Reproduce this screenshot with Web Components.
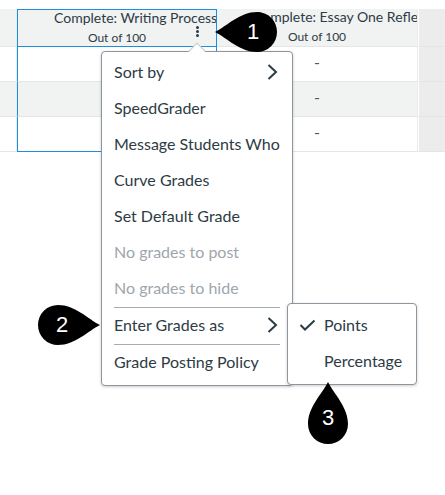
<!DOCTYPE html>
<html>
<head>
<meta charset="utf-8">
<style>
  html, body { margin: 0; background: #fff; }
  body { width: 445px; height: 495px; overflow: hidden; font-family: Lato, "Liberation Sans", sans-serif; color: #2d3b45; }
  gb-stage { display: block; }
</style>
</head>
<body>
<gb-stage>
  <gb-grid></gb-grid>

  <gb-menu style="left:101px;top:51px;width:192px;height:335px" arrow>
    <gb-item arrow-right>Sort by</gb-item>
    <gb-item>SpeedGrader</gb-item>
    <gb-item>Message Students Who</gb-item>
    <gb-item>Curve Grades</gb-item>
    <gb-item>Set Default Grade</gb-item>
    <gb-item disabled>No grades to post</gb-item>
    <gb-item disabled>No grades to hide</gb-item>
    <gb-sep></gb-sep>
    <gb-item arrow-right>Enter Grades as</gb-item>
    <gb-sep></gb-sep>
    <gb-item>Grade Posting Policy</gb-item>
  </gb-menu>

  <gb-menu style="left:287px;top:303px;width:130px;height:82px">
    <gb-item checked>Points</gb-item>
    <gb-item inset>Percentage</gb-item>
  </gb-menu>

  <gb-pin dir="left" style="left:215px;top:12px">1</gb-pin>
  <gb-pin dir="right" style="left:38px;top:305px">2</gb-pin>
  <gb-pin dir="up" style="left:308px;top:382px">3</gb-pin>
</gb-stage>

<script>
class GbStage extends HTMLElement {
  constructor() {
    super();
    this.attachShadow({ mode: 'open' });
    this.shadowRoot.innerHTML = `
      <style>
        :host { display: block; position: relative; box-sizing: border-box; width: 445px; height: 495px; padding-top: 9px; }
      </style>
      <slot></slot>
    `;
  }
}

class GbGrid extends HTMLElement {
  constructor() {
    super();
    this.attachShadow({ mode: 'open' });
    const title1 = 'Complete: Writing Process';
    const title2 = 'Complete: Essay One Reflection';
    this.shadowRoot.innerHTML = `
      <style>
        :host {
          display: grid;
          grid-template-columns: 17px 200px 201px 27px;
          grid-template-rows: 38px 35px 35px 35px;
          font-size: 13px;
          color: #2d3b45;
        }
        .cell { box-sizing: border-box; border-right: 1px solid #e9ebec; border-bottom: 1px solid #e3e5e6; min-width: 0; }
        .gray { background: #f1f2f2; }
        .side { background: #ececec; border-right: 0; border-left: 1px solid #fff; }
        .head { display: flex; flex-direction: column; overflow: hidden; background: #f1f2f2; position: relative; }
        .title { white-space: nowrap; line-height: 18px; font-size: 14px; padding-left: 36px; margin-top: -1px; }
        .sub { line-height: 22px; font-size: 12px; text-align: center; }
        .dash { display: flex; justify-content: center; padding-top: 3px; font-size: 16px; line-height: 24px; color: #4d5963; }
        .sel-head { border: 1px solid #1c8fdc; background: #f1f2f2; }
        .sel { border-left: 1px solid #1c8fdc; border-right: 1px solid #1c8fdc; }
        .sel-last { border-bottom: 1px solid #1c8fdc; }
        .dots { position: absolute; left: 178px; top: 16px; width: 3px; display: flex; flex-direction: column; gap: 1px; }
        .dots i { display: block; width: 3px; height: 3px; border-radius: 50%; background: #2d3b45; }
      </style>
      <div class="cell gray"></div>
      <div class="cell head sel-head"><span class="title">${title1}</span><span class="sub">Out of 100</span>
        <div class="dots"><i></i><i></i><i></i></div></div>
      <div class="cell head"><span class="title">${title2}</span><span class="sub">Out of 100</span></div>
      <div class="cell side"></div>

      <div class="cell"></div><div class="cell sel"></div><div class="cell dash">-</div><div class="cell side"></div>
      <div class="cell gray"></div><div class="cell sel gray"></div><div class="cell dash gray">-</div><div class="cell side"></div>
      <div class="cell"></div><div class="cell sel sel-last"></div><div class="cell dash">-</div><div class="cell side"></div>
    `;
  }
}

class GbMenu extends HTMLElement {
  constructor() {
    super();
    this.attachShadow({ mode: 'open' });
    this.shadowRoot.innerHTML = `
      <style>
        :host {
          display: flex;
          flex-direction: column;
          position: absolute;
          box-sizing: border-box;
          padding: 3px 0;
          background: #fff;
          border: 1px solid #8d959f;
          border-radius: 4px;
          box-shadow: 0 1px 3px rgba(0,0,0,.2);
        }
        .tip { display: none; position: absolute; left: 89px; top: -7px; width: 11px; height: 11px; background: #fff;
               border-left: 1px solid #c4c8cc; border-top: 1px solid #c4c8cc; transform: rotate(45deg); }
        :host([arrow]) .tip { display: block; }
      </style>
      <div class="tip"></div>
      <slot></slot>
    `;
  }
}

class GbItem extends HTMLElement {
  constructor() {
    super();
    this.attachShadow({ mode: 'open' });
    this.shadowRoot.innerHTML = `
      <style>
        :host {
          display: flex;
          align-items: center;
          justify-content: space-between;
          flex: none;
          box-sizing: border-box;
          height: 36px;
          padding: 0 14px 4px 12px;
          font-size: 16px;
          white-space: nowrap;
          color: #2d3b45;
        }
        :host([disabled]) { color: #9ea6ad; }
        :host([checked]), :host([inset]) { justify-content: flex-start; padding-bottom: 2px; }
        :host([inset]) { padding-left: 36px; }
        .chev, .check { display: none; position: relative; }
        :host([arrow-right]) .chev { display: block; top: 1px; }
        :host([checked]) .check { display: block; top: 1px; margin-right: 8px; margin-left: -1px; }
      </style>
      <svg class="check" width="17" height="14" viewBox="0 0 17 14" fill="none" stroke="#2d3b45" stroke-width="2"><path d="M1.5 7l4.5 4.5L15.5 2.5"/></svg>
      <span><slot></slot></span>
      <svg class="chev" width="11" height="16" viewBox="0 0 11 16" fill="none" stroke="#2d3b45" stroke-width="2"><path d="M1.5 1l7.5 7-7.5 7"/></svg>
    `;
  }
}

class GbSep extends HTMLElement {
  constructor() {
    super();
    this.attachShadow({ mode: 'open' });
    this.shadowRoot.innerHTML = `
      <style>
        :host { display: block; flex: none; height: 1px; margin: 0 12px; background: #a5acb2; }
      </style>
    `;
  }
}

class GbPin extends HTMLElement {
  constructor() {
    super();
    this.attachShadow({ mode: 'open' });
    // teardrop is drawn pointing right, then turned for the other directions
    this.shadowRoot.innerHTML = `
      <style>
        :host { display: block; position: absolute; line-height: 0; }
        :host([dir="left"]), :host([dir="right"]) { width: 62px; height: 40px; }
        :host([dir="up"]) { width: 40px; height: 62px; }
        svg { position: absolute; left: 0; top: 0; overflow: visible; }
        .num { position: absolute; left: 0; top: 0; width: 100%; height: 100%; display: flex; align-items: center; justify-content: center;
               font: 22px "Liberation Sans", Arial, sans-serif; color: #fff; line-height: 1; }
        :host([dir="left"]) .num { left: 7px; }
        :host([dir="right"]) .num { left: -7px; }
        :host([dir="up"]) .num { top: 5px; }
      </style>
      <svg width="62" height="62" viewBox="0 0 62 62"><path id="p" fill="#000"/></svg>
      <div class="num"><slot></slot></div>
    `;
  }
  connectedCallback() {
    const dir = this.getAttribute('dir');
    const path = this.shadowRoot.getElementById('p');
    path.setAttribute('d', 'M62 20C50 26 37 40 20 40A20 20 0 0 1 20 0C37 0 50 14 62 20Z');
    if (dir === 'left') path.setAttribute('transform', 'matrix(-1 0 0 1 62 0)');
    if (dir === 'up') path.setAttribute('transform', 'matrix(0 -1 1 0 0 62)');
  }
}

customElements.define('gb-stage', GbStage);
customElements.define('gb-grid', GbGrid);
customElements.define('gb-menu', GbMenu);
customElements.define('gb-item', GbItem);
customElements.define('gb-sep', GbSep);
customElements.define('gb-pin', GbPin);
</script>
</body>
</html>
